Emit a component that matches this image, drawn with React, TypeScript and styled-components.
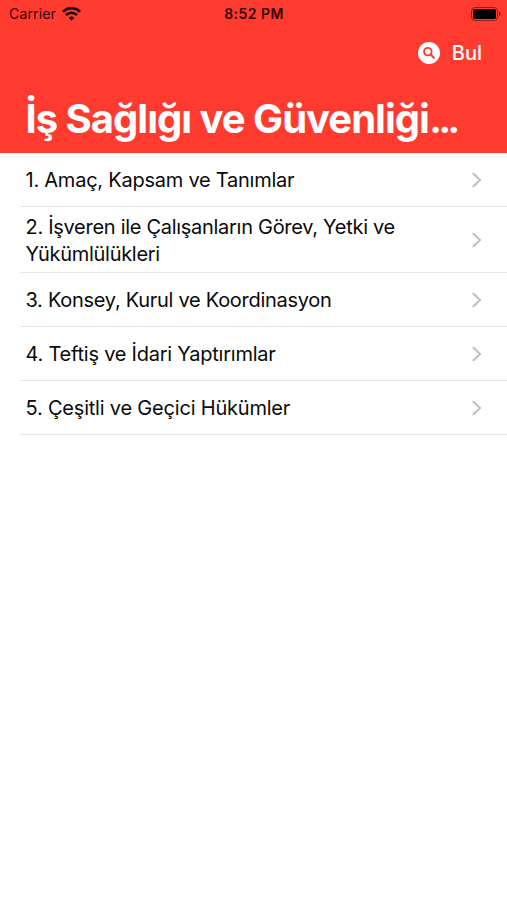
import React from "react";
import styled, { createGlobalStyle } from "styled-components";

const Global = createGlobalStyle`
  * { box-sizing: border-box; }
  body { margin: 0; background: #fff; font-family: Inter, sans-serif; color: #000; }
`;
const Screen = styled.main`width: 507px; height: 900px; background: #fff; overflow: hidden;`;
const Header = styled.header`height: 153px; background: #ff3b30; color: #fff;`;
const StatusBar = styled.div`
  height: 27px; display: grid; grid-template-columns: 1fr auto 1fr; align-items: center;
  padding: 0 6px 0 9px; color: #300604; font-size: 14px; line-height: 27px;
`;
const Carrier = styled.div`display: flex; align-items: center; gap: 6px;`;
const CarrierName = styled.span`width: 47px; white-space: nowrap; letter-spacing: 0.15px;`;
const Time = styled.time`font-weight: 600; letter-spacing: 0.45px; white-space: nowrap; margin-right: 2px;`;
const Battery = styled.svg`justify-self: end; display: block;`;
const NavBar = styled.div`height: 52px; display: flex; justify-content: flex-end; align-items: center; padding-right: 25px;`;
const FindButton = styled.button`
  border: 0; padding: 0; background: none; color: #fff; display: flex; align-items: center; gap: 12px;
  font: 500 20px/26px Inter, sans-serif;
`;
const Title = styled.h1`
  margin: 0; padding: 15px 0 0 25.5px; font-size: 40px; line-height: 50px; font-weight: 700;
  letter-spacing: -1px; white-space: nowrap;
`;
const Ellipsis = styled.span`font-size: 38px; letter-spacing: -3.6px; margin-left: 0.5px;`;
const List = styled.ul`margin: 0; padding: 0 0 0 20px; list-style: none;`;
const Row = styled.li<{ $h: number }>`
  height: ${(p) => p.$h}px; display: flex; align-items: center; justify-content: space-between;
  padding: 0 25px 0 6px; border-bottom: 1px solid #e6e6e7;
`;
const Label = styled.span<{ $ls: number }>`
  padding-top: 2px; margin-left: -0.5px; color: #0a0a0a;
  font-size: 20px; line-height: 27px; white-space: pre-line; letter-spacing: ${(p) => p.$ls}px;
`;

const rows = [
  { text: "1. Amaç, Kapsam ve Tanımlar", h: 54, ls: -0.24 },
  { text: "2. İşveren ile Çalışanların Görev, Yetki ve\nYükümlülükleri", h: 66, ls: -0.29 },
  { text: "3. Konsey, Kurul ve Koordinasyon", h: 54, ls: -0.28 },
  { text: "4. Teftiş ve İdari Yaptırımlar", h: 54, ls: -0.23 },
  { text: "5. Çeşitli ve Geçici Hükümler", h: 54, ls: -0.2 },
];

export default function App() {
  return (
    <Screen>
      <Global />
      <Header>
        <StatusBar>
          <Carrier>
            <CarrierName>Carrier</CarrierName>
            <svg width="19" height="14" viewBox="0 0 19 14" fill="none" stroke="#140202" strokeWidth="2.6">
              <path d="M1 4.8a12 12 0 0 1 17 0M4 8a7.8 7.8 0 0 1 11 0" />
              <path d="M6.7 10.9a4 4 0 0 1 5.6 0L9.5 13.8Z" fill="#140202" stroke="none" />
            </svg>
          </Carrier>
          <Time>8:52 PM</Time>
          <Battery width="30" height="14" viewBox="0 0 30 14">
            <rect x="0.5" y="0.5" width="26" height="13" rx="3.5" fill="none" stroke="#240504" strokeOpacity=".5" />
            <rect x="2" y="2" width="23" height="10" rx="1.8" fill="#000" />
            <path d="M28 4.6q3.2 2.4 0 4.8Z" fill="#240504" opacity=".6" />
          </Battery>
        </StatusBar>
        <NavBar>
          <FindButton>
            <svg width="22" height="22" viewBox="0 0 22 22">
              <circle cx="11" cy="11" r="11" fill="#fff" />
              <g fill="none" stroke="#ff3b30" strokeWidth="1.8" strokeLinecap="round">
                <circle cx="9.8" cy="9.6" r="3.8" />
                <path d="m12.7 12.6 3.1 3.2" strokeWidth="2.1" />
              </g>
            </svg>
            Bul
          </FindButton>
        </NavBar>
        <Title>İş Sağlığı ve Güvenliği<Ellipsis>...</Ellipsis></Title>
      </Header>
      <List>
        {rows.map((r) => (
          <Row key={r.text} $h={r.h}>
            <Label $ls={r.ls}>{r.text}</Label>
            <svg width="10" height="16" viewBox="0 0 10 16" fill="none" stroke="#c4c4c7" strokeWidth="2.3" strokeLinecap="round" strokeLinejoin="round">
              <path d="M1.6 1.8 8.1 8l-6.5 6.2" />
            </svg>
          </Row>
        ))}
      </List>
    </Screen>
  );
}
